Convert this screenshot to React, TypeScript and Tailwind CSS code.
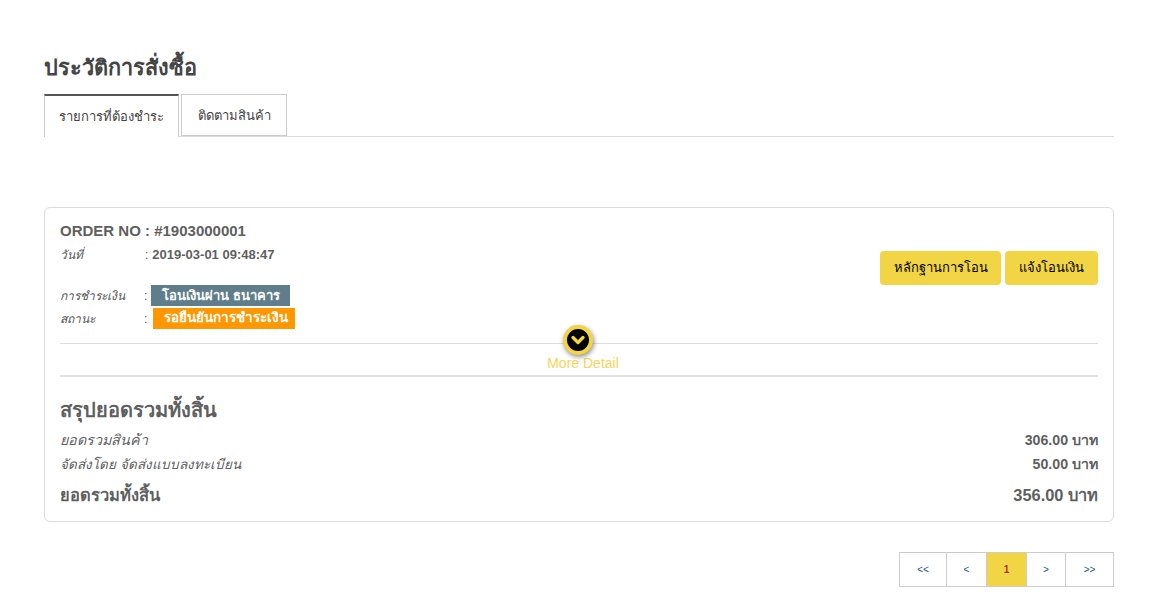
import { ChevronDown } from 'lucide-react';

const pages = [
  { label: '<<', w: 'w-[46px]' },
  { label: '<', w: 'w-[40px]' },
  { label: '1', w: 'w-[40px]', active: true },
  { label: '>', w: 'w-[39px]' },
  { label: '>>', w: 'w-[48px]' },
];

export default function App() {
  return (
    <div className="min-h-[615px] bg-white pt-[53px] pr-[40px] pl-[44px] font-['Liberation_Sans',sans-serif] text-[#555]">
      {/* Title */}
      <h1 className="h-[41px] text-[21.7px] leading-[30px] font-bold text-[#444]">ประวัติการสั่งซื้อ</h1>

      {/* Tabs */}
      <div className="flex h-[43px] items-end border-b border-[#ddd]">
        <div className="-mb-px flex h-[43px] w-[135px] items-center justify-center border-x border-x-[#ccc] border-t-2 border-t-[#555] bg-white pt-[1px] text-[13px] text-[#444]">
          รายการที่ต้องชำระ
        </div>
        <div className="mb-0 ml-[2px] flex h-[42px] w-[106px] items-center justify-center border border-[#ccc] pt-[1px] text-[13px] text-[#444]">
          ติดตามสินค้า
        </div>
      </div>

      {/* Order card */}
      <div className="mt-[70px] h-[315px] rounded-[6px] border border-[#ddd] px-[15px] pt-[14px]">
        <div className="flex h-[121px] justify-between">
          <div>
            <div className="text-[15px] leading-[18px] font-bold text-[#5f5f5f]">ORDER NO : #1903000001</div>
            <div className="mt-[6px] flex text-[12px] leading-[18px]">
              <span className="w-[85px] italic">วันที่</span>
              <span>:</span>
              <span className="ml-[4px] text-[13px] font-bold text-[#5f5f5f]">2019-03-01 09:48:47</span>
            </div>
            <div className="mt-[21px] flex h-[21px] items-center text-[12px]">
              <span className="w-[84px] italic">การชำระเงิน</span>
              <span>:</span>
              <span className="ml-[4px] flex h-[21px] w-[139px] items-center justify-center bg-[#607d8b] text-[13px] font-bold text-white">โอนเงินผ่าน ธนาคาร</span>
            </div>
            <div className="mt-[2px] flex h-[21px] items-center text-[12px]">
              <span className="w-[84px] italic">สถานะ</span>
              <span>:</span>
              <span className="ml-[6px] flex h-[21px] w-[142px] items-center justify-center bg-[#ff9800] pl-[4px] text-[13.5px] font-bold text-white">รอยืนยันการชำระเงิน</span>
            </div>
          </div>
          <div className="mt-[29px] flex h-[34px] gap-[4px] text-[13px] text-black">
            <button className="w-[121px] rounded-[4px] bg-[#f2d544]">หลักฐานการโอน</button>
            <button className="w-[93px] rounded-[4px] bg-[#f2d544]">แจ้งโอนเงิน</button>
          </div>
        </div>

        {/* More detail */}
        <div className="relative h-[32px] border-t border-[#ddd]">
          <div className="absolute top-[-19px] left-[503px] flex size-[30px] items-center justify-center rounded-full border-[4px] border-[#f2d544] bg-black shadow-[1px_2px_5px_rgba(0,0,0,0.45)]">
            <ChevronDown className="size-[20px] text-[#f2d544]" strokeWidth={4} />
          </div>
          <div className="pt-[11px] pl-[8px] text-center text-[14px] leading-[16px] text-[#f5d55a]">More Detail</div>
        </div>

        {/* Summary */}
        <div className="border-t-2 border-[#e2e2e2] pt-[21px] text-[#5f5f5f]">
          <h2 className="text-[20px] leading-[24px] font-bold">สรุปยอดรวมทั้งสิ้น</h2>
          <div className="mt-[7px] flex h-[24px] items-center justify-between text-[14.2px]">
            <span className="text-[14.3px] italic">ยอดรวมสินค้า</span>
            <span className="font-bold">306.00 บาท</span>
          </div>
          <div className="flex h-[24px] items-center justify-between text-[14.2px]">
            <span className="text-[13.5px] italic">จัดส่งโดย จัดส่งแบบลงทะเบียน</span>
            <span className="font-bold">50.00 บาท</span>
          </div>
          <div className="mt-[5px] flex h-[27px] items-center justify-between text-[16.4px] font-bold">
            <span className="text-[16.5px]">ยอดรวมทั้งสิ้น</span>
            <span>356.00 บาท</span>
          </div>
        </div>
      </div>

      {/* Pagination */}
      <div className="mt-[30px] flex justify-end">
        <div className="flex h-[35px] border border-[#ccc] text-[10px]">
          {pages.map((p, i) => (
            <div
              key={p.label}
              className={`flex items-center justify-center ${p.w} ${i > 0 ? 'border-l border-[#ccc]' : ''} ${p.active ? 'bg-[#f2d544] font-bold text-[#a33]' : 'text-[#23527c]'}`}
            >
              {p.label}
            </div>
          ))}
        </div>
      </div>
    </div>
  );
}
